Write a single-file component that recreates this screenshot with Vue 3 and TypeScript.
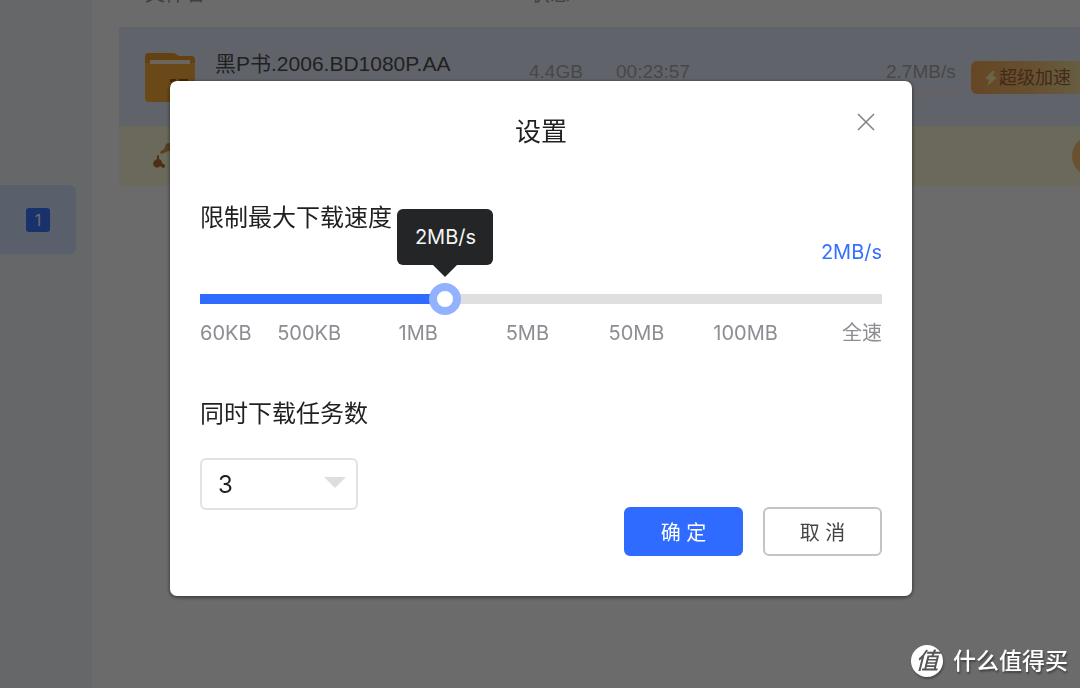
<script setup lang="ts">
import { computed, ref } from 'vue'

const ticks: string[] = ['60KB', '500KB', '1MB', '5MB', '50MB', '100MB', '全速']
const taskOptions: number[] = [1, 2, 3, 4, 5]

const position = ref<number>(353)
const speed = ref<string>('2MB/s')
const tasks = ref<number>(3)
const open = ref<boolean>(true)

const ratio = computed(() => position.value / 1000)
const sliderVars = computed(() => ({ '--ratio': String(ratio.value) }))
</script>

<template>
  <div class="app">
    <aside class="sidebar">
      <a class="nav-item" href="#downloads"><span class="count">1</span></a>
    </aside>

    <main class="content">
      <table class="files">
        <colgroup>
          <col class="col-name" />
          <col class="col-size" />
          <col class="col-time" />
          <col class="col-speed" />
          <col />
        </colgroup>
        <thead>
          <tr>
            <th class="head-name" scope="col">文件名</th>
            <th class="head-state" scope="col" colspan="4">状态</th>
          </tr>
        </thead>
        <tbody>
          <tr class="file">
            <td>
              <div class="name">
                <svg class="folder" viewBox="0 0 50 50" aria-hidden="true">
                  <path d="M4 1H28Q30 1 32 3L34 4H46Q50 4 50 8V46Q50 50 46 50H4Q0 50 0 46V5Q0 1 4 1Z" fill="#fdac38" />
                  <path d="M4 1H28Q30 1 32 3L34 4H46Q50 4 50 8V11H0V5Q0 1 4 1Z" fill="#ee9c2a" />
                  <rect x="5" y="8" width="40" height="4" fill="#fff1df" />
                  <path d="M25 27H31V30H25ZM34 27H43V30H34Z" fill="#ad5b12" />
                </svg>
                <span>黑P书.2006.BD1080P.AA</span>
              </div>
            </td>
            <td class="meta">4.4GB</td>
            <td class="meta">00:23:57</td>
            <td class="meta speed-cell">2.7MB/s<span class="bar"></span></td>
            <td class="boost-cell">
              <button class="boost" type="button">
                <svg viewBox="0 0 12 16" aria-hidden="true"><path d="M8 1L1 8L5 10L3 15L11 8L7 6L9 2Z" fill="#fff0a8" stroke="#fff0a8" stroke-linejoin="round" /></svg>
                <span>超级加速</span>
              </button>
            </td>
          </tr>
        </tbody>
      </table>
      <section class="promo">
        <svg class="gift" viewBox="0 0 30 30" aria-hidden="true">
          <path d="M13 3Q17 1 22 3V10H15L11 12L8 13L7 11L11 8Z" fill="#d2974f" />
          <path d="M4 15Q5 13 6 15V18Q9 19 9 22L12 24V26L10 27L7 25Q5 28 2 26Q-1 24 1 20L4 18Z" fill="#bd6e35" />
        </svg>
        <button class="pill" type="button" aria-label="+"></button>
      </section>
    </main>

    <div v-if="open" class="mask">
      <form class="dialog" role="dialog" aria-labelledby="dialog-title" @submit.prevent="open = false">
        <header class="dialog-head">
          <h1 id="dialog-title">设置</h1>
          <button class="close" type="button" aria-label="×" @click="open = false">
            <svg viewBox="0 0 24 24" aria-hidden="true"><path d="M4 2L20 18M20 2L4 18" fill="none" stroke="#808389" stroke-width="1.600" /></svg>
          </button>
        </header>

        <label class="label" for="limit">限制最大下载速度</label>
        <output class="value" for="limit">{{ speed }}</output>
        <div class="slider" :style="sliderVars">
          <input id="limit" v-model.number="position" type="range" min="0" max="1000" />
          <div class="tip">{{ speed }}</div>
        </div>
        <div class="ticks">
          <span v-for="t in ticks" :key="t">{{ t }}</span>
        </div>

        <label class="label" for="tasks">同时下载任务数</label>
        <div class="bottom">
          <div class="select">
            <select id="tasks" v-model.number="tasks">
              <option v-for="n in taskOptions" :key="n" :value="n">{{ n }}</option>
            </select>
            <svg viewBox="0 0 22 12" aria-hidden="true"><path d="M0 0H22L11 11Z" fill="#dedede" /></svg>
          </div>
          <div class="actions">
            <button class="btn primary" type="submit">确 定</button>
            <button class="btn" type="button" @click="open = false">取 消</button>
          </div>
        </div>
      </form>
    </div>

    <div class="brand">
      <span class="brand-mark">值</span>
      <span>什么值得买</span>
    </div>
  </div>
</template>

<style>
body {
  margin: 0;
}
</style>

<style scoped>
* {
  box-sizing: border-box;
}
.app {
  display: flex;
  min-height: 100vh;
  overflow: hidden;
  background: #fff;
  color: #1f2022;
  font-family: Inter, 'Noto Sans CJK SC', sans-serif;
  font-size: 20px;
}
button,
input,
select {
  font: inherit;
  color: inherit;
  margin: 0;
}
.sidebar {
  flex: none;
  width: 92px;
  padding-top: 185px;
  background: #f4f6fa;
}
.nav-item {
  display: flex;
  align-items: center;
  width: 76px;
  height: 69px;
  padding-left: 26px;
  border-radius: 0 6px 6px 0;
  background: #d4e4ff;
  text-decoration: none;
}
.count {
  width: 24px;
  height: 24px;
  border-radius: 3px;
  background: #3d77ff;
  color: #fff;
  font-size: 16px;
  line-height: 24px;
  text-align: center;
}
.content {
  flex: 1;
  min-width: 0;
  padding-left: 27px;
}
.files {
  width: 100%;
  margin-top: -16px;
  border-collapse: collapse;
  table-layout: fixed;
  font-family: 'Liberation Sans', 'Noto Sans CJK SC', sans-serif;
}
.col-name {
  width: 410px;
}
.col-size {
  width: 87px;
}
.col-time {
  width: 270px;
}
.col-speed {
  width: 85px;
}
th {
  height: 43px;
  padding: 0;
  color: #999;
  font-weight: 400;
  line-height: 20px;
  text-align: left;
  vertical-align: top;
}
.head-name {
  padding-left: 26px;
}
.head-state {
  padding-left: 1px;
}
td {
  height: 99px;
  padding: 0;
  vertical-align: top;
}
.file {
  background: #e6edff;
}
.name {
  display: flex;
  gap: 20px;
  padding: 25px 0 0 26px;
  color: #505050;
  font-size: 21px;
  line-height: 24px;
  white-space: nowrap;
}
.folder {
  flex: none;
  width: 50px;
  height: 50px;
}
.meta {
  padding-top: 32px;
  color: #a9a9a9;
  font-size: 19px;
  line-height: 26px;
  white-space: nowrap;
}
.bar {
  display: block;
  width: 73px;
  height: 4px;
  margin-top: 6px;
  background: #eeeaf0;
}
.boost-cell {
  padding-top: 34px;
}
.boost {
  display: flex;
  align-items: center;
  gap: 2px;
  width: 120px;
  height: 33px;
  padding: 0 0 0 14px;
  border: 0;
  border-radius: 6px 0 0 6px;
  background: linear-gradient(90deg, #f2a858, #f0c070 50%, #f8e6a8);
  color: #a0623c;
  font-size: 18px;
  line-height: 30px;
  white-space: nowrap;
}
.boost svg {
  flex: none;
  width: 12px;
  height: 16px;
}
.promo {
  display: flex;
  align-items: center;
  justify-content: space-between;
  height: 60px;
  padding-left: 34px;
  background: #fffadb;
}
.gift {
  width: 30px;
  height: 30px;
}
.pill {
  flex: none;
  width: 60px;
  height: 40px;
  margin-right: -52px;
  border: 0;
  border-radius: 20px;
  background: #f9c272;
}
.mask {
  position: fixed;
  inset: 0;
  display: flex;
  align-items: flex-start;
  justify-content: center;
  padding: 81px 19px 20px 21px;
  background: rgba(0, 0, 0, 0.58);
}
.dialog {
  width: 100%;
  max-width: 742px;
  padding: 31px 30px 40px;
  border-radius: 7px;
  background: #fff;
  box-shadow: 0 1px 4px rgba(0, 0, 0, 0.6);
}
.dialog-head {
  display: grid;
  grid-template-columns: 1fr auto 1fr;
}
h1 {
  grid-column: 2;
  margin: 0;
  font-size: 26px;
  font-weight: 400;
  line-height: 40px;
}
.close {
  justify-self: end;
  width: 24px;
  height: 24px;
  margin-right: 4px;
  padding: 0;
  border: 0;
  background: none;
}
.close svg {
  display: block;
  width: 24px;
  height: 24px;
}
.label {
  display: block;
  margin-top: 50px;
  font-size: 24px;
  line-height: 32px;
}
.value {
  display: block;
  margin-top: 3px;
  color: #3370ff;
  line-height: 30px;
  text-align: right;
}
.slider {
  position: relative;
  height: 32px;
  margin-top: 16px;
}
.slider input {
  display: block;
  width: 100%;
  height: 32px;
  appearance: none;
  outline: none;
  background: linear-gradient(#306bff, #306bff) left center / calc(16px + (100% - 32px) * var(--ratio)) 10px no-repeat,
    linear-gradient(#dfdfdf, #dfdfdf) left center / 100% 10px no-repeat;
}
.slider input::-webkit-slider-thumb {
  appearance: none;
  width: 32px;
  height: 32px;
  border: 8px solid #92b1ff;
  border-radius: 50%;
  background: #fff;
}
.tip {
  position: absolute;
  bottom: 50px;
  left: calc(16px + (100% - 32px) * var(--ratio));
  width: 96px;
  border-radius: 6px;
  background: #242527;
  color: #f5f5f5;
  line-height: 56px;
  text-align: center;
  transform: translateX(-50%);
}
.tip::after {
  content: '';
  position: absolute;
  top: 100%;
  left: 50%;
  margin-left: -12px;
  border: 12px solid transparent;
  border-top-color: #242527;
  border-bottom: 0;
}
.ticks {
  display: grid;
  grid-template-columns: 2fr 4fr 4fr 4fr 4fr 4fr 3fr;
  margin-top: 3px;
  color: #8c8e94;
  line-height: 30px;
  text-align: center;
  white-space: nowrap;
}
.ticks span:first-child {
  text-align: left;
}
.ticks span:last-child {
  text-align: right;
}
.bottom {
  display: flex;
  justify-content: space-between;
  min-height: 98px;
  margin-top: 28px;
}
.select {
  position: relative;
  align-self: flex-start;
  width: 158px;
}
.select select {
  display: block;
  width: 100%;
  height: 52px;
  padding: 0 40px 0 16px;
  border: 2px solid #e2e2e2;
  border-radius: 6px;
  appearance: none;
  background: #fff;
  font-size: 24px;
}
.select svg {
  position: absolute;
  top: 19px;
  right: 12px;
  width: 22px;
  height: 12px;
  pointer-events: none;
}
.actions {
  display: flex;
  align-self: flex-end;
  gap: 20px;
}
.btn {
  width: 119px;
  height: 49px;
  padding: 0;
  border: 2px solid #c4c4c4;
  border-radius: 6px;
  background: #fff;
  color: #444;
}
.primary {
  border-color: #306bff;
  background: #306bff;
  color: #fff;
}
.brand {
  position: fixed;
  right: 12px;
  bottom: 11px;
  display: flex;
  align-items: center;
  gap: 10px;
  color: #fff;
  font-size: 23px;
  font-weight: 500;
  line-height: 32px;
  text-shadow: 1px 2px 2px rgba(0, 0, 0, 0.4);
}
.brand-mark {
  width: 32px;
  height: 32px;
  border-radius: 50%;
  background: #fff;
  box-shadow: 1px 2px 2px rgba(0, 0, 0, 0.3);
  color: #555;
  font-style: italic;
  text-align: center;
  text-shadow: none;
}
</style>
